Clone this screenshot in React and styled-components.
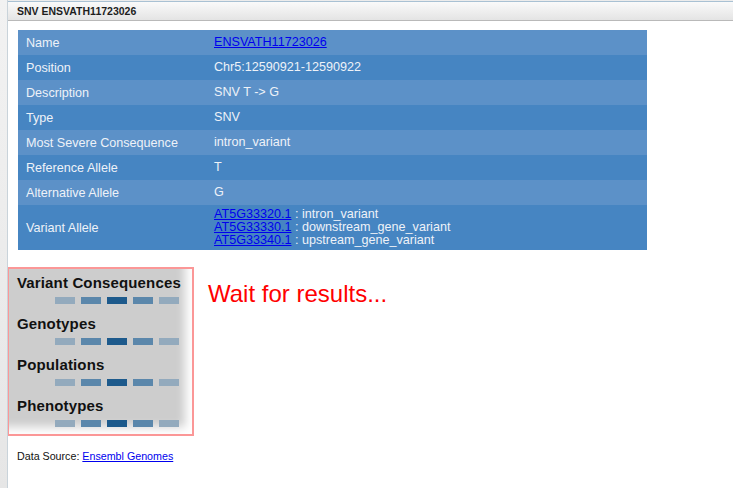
import React from 'react';
import styled, { createGlobalStyle } from 'styled-components';

const Global = createGlobalStyle`
  html, body { margin: 0; padding: 0; background: #fff; }
  body { font-family: "Liberation Sans", Arial, sans-serif; }
`;

const Page = styled.div`
  display: flex;
  width: 733px;
  height: 488px;
  overflow: hidden;
  background: #ececec;
`;

const Backdrop = styled.div`
  width: 7px;
  flex: none;
  background: linear-gradient(#f2f2f2, #e6e6e6);
  border-right: 1px solid #c9d3da;
`;

const Window = styled.div`
  flex: 1;
  display: flex;
  flex-direction: column;
  margin-top: 1px;
  border-top: 1px solid #a9c1d3;
  background: #fff;
`;

const TitleBar = styled.div`
  height: 18px;
  display: flex;
  align-items: center;
  padding-left: 9px;
  background: linear-gradient(#fafafa, #e4e4e4);
  border-bottom: 1px solid #b9b9b9;
  font-size: 10.5px;
  font-weight: bold;
  color: #1e1e1e;
`;

const Body = styled.div`
  padding-top: 9px;
`;

const Table = styled.div`
  margin-left: 10px;
  width: 629px;
  font-size: 12.6px;
  color: #eef2f8;
`;

const Row = styled.div`
  display: grid;
  grid-template-columns: 196px 1fr;
  align-items: center;
  height: ${p => p.$h || 25}px;
  background: ${p => (p.$odd ? '#4685c2' : '#5c91c8')};
`;

const Label = styled.div`
  padding-left: 8px;
`;

const Value = styled.div`
  line-height: 13px;
`;

const Link = styled.a`
  color: #0000ee;
  text-decoration: underline;
  cursor: pointer;
`;

const Lower = styled.div`
  display: flex;
  align-items: flex-start;
  margin-top: 17px;
`;

const LoadingBox = styled.div`
  width: 182px;
  height: 165px;
  box-sizing: content-box;
  border: 2px solid #fb9797;
  border-left-width: 1px;
  background: #cdcdcd;
  box-shadow: inset -10px -10px 10px -3px #fff;
  padding-left: 1px;
`;

const Section = styled.div`
  padding: 5px 0 0 7px;
  height: 36px;
`;

const Heading = styled.div`
  font-size: 15px;
  font-weight: bold;
  color: #111;
  line-height: 18px;
  letter-spacing: 0.15px;
`;

const Bars = styled.div`
  display: flex;
  gap: 6px;
  margin: 5px 0 0 38px;
`;

const Bar = styled.div`
  width: 20px;
  height: 7px;
  background: ${p => p.$c};
`;

const Waiting = styled.div`
  margin: 13px 0 0 14px;
  font-size: 24px;
  line-height: 28px;
  color: #ff0000;
`;

const Source = styled.div`
  margin: 14px 0 0 9px;
  font-size: 10.7px;
  color: #111;
`;

const rows = [
  ['Name', <Link>ENSVATH11723026</Link>],
  ['Position', 'Chr5:12590921-12590922'],
  ['Description', 'SNV T -> G'],
  ['Type', 'SNV'],
  ['Most Severe Consequence', 'intron_variant'],
  ['Reference Allele', 'T'],
  ['Alternative Allele', 'G'],
];

const alleles = [
  ['AT5G33320.1', 'intron_variant'],
  ['AT5G33330.1', 'downstream_gene_variant'],
  ['AT5G33340.1', 'upstream_gene_variant'],
];

const barColors = ['#93aabd', '#5b87ab', '#1d5a8c', '#5b87ab', '#93aabd'];

const sections = ['Variant Consequences', 'Genotypes', 'Populations', 'Phenotypes'];

export default function App() {
  return (
    <>
      <Global />
      <Page>
        <Backdrop />
        <Window>
          <TitleBar>SNV ENSVATH11723026</TitleBar>
          <Body>
            <Table>
              {rows.map(([k, v], i) => (
                <Row key={k} $odd={i % 2 === 1}>
                  <Label>{k}</Label>
                  <Value>{v}</Value>
                </Row>
              ))}
              <Row $odd $h={45}>
                <Label>Variant Allele</Label>
                <Value>
                  {alleles.map(([id, c]) => (
                    <div key={id}>
                      <Link>{id}</Link> : {c}
                    </div>
                  ))}
                </Value>
              </Row>
            </Table>
            <Lower>
              <LoadingBox>
                {sections.map(s => (
                  <Section key={s}>
                    <Heading>{s}</Heading>
                    <Bars>
                      {barColors.map((c, i) => (
                        <Bar key={i} $c={c} />
                      ))}
                    </Bars>
                  </Section>
                ))}
              </LoadingBox>
              <Waiting>Wait for results...</Waiting>
            </Lower>
            <Source>
              Data Source: <Link>Ensembl Genomes</Link>
            </Source>
          </Body>
        </Window>
      </Page>
    </>
  );
}
